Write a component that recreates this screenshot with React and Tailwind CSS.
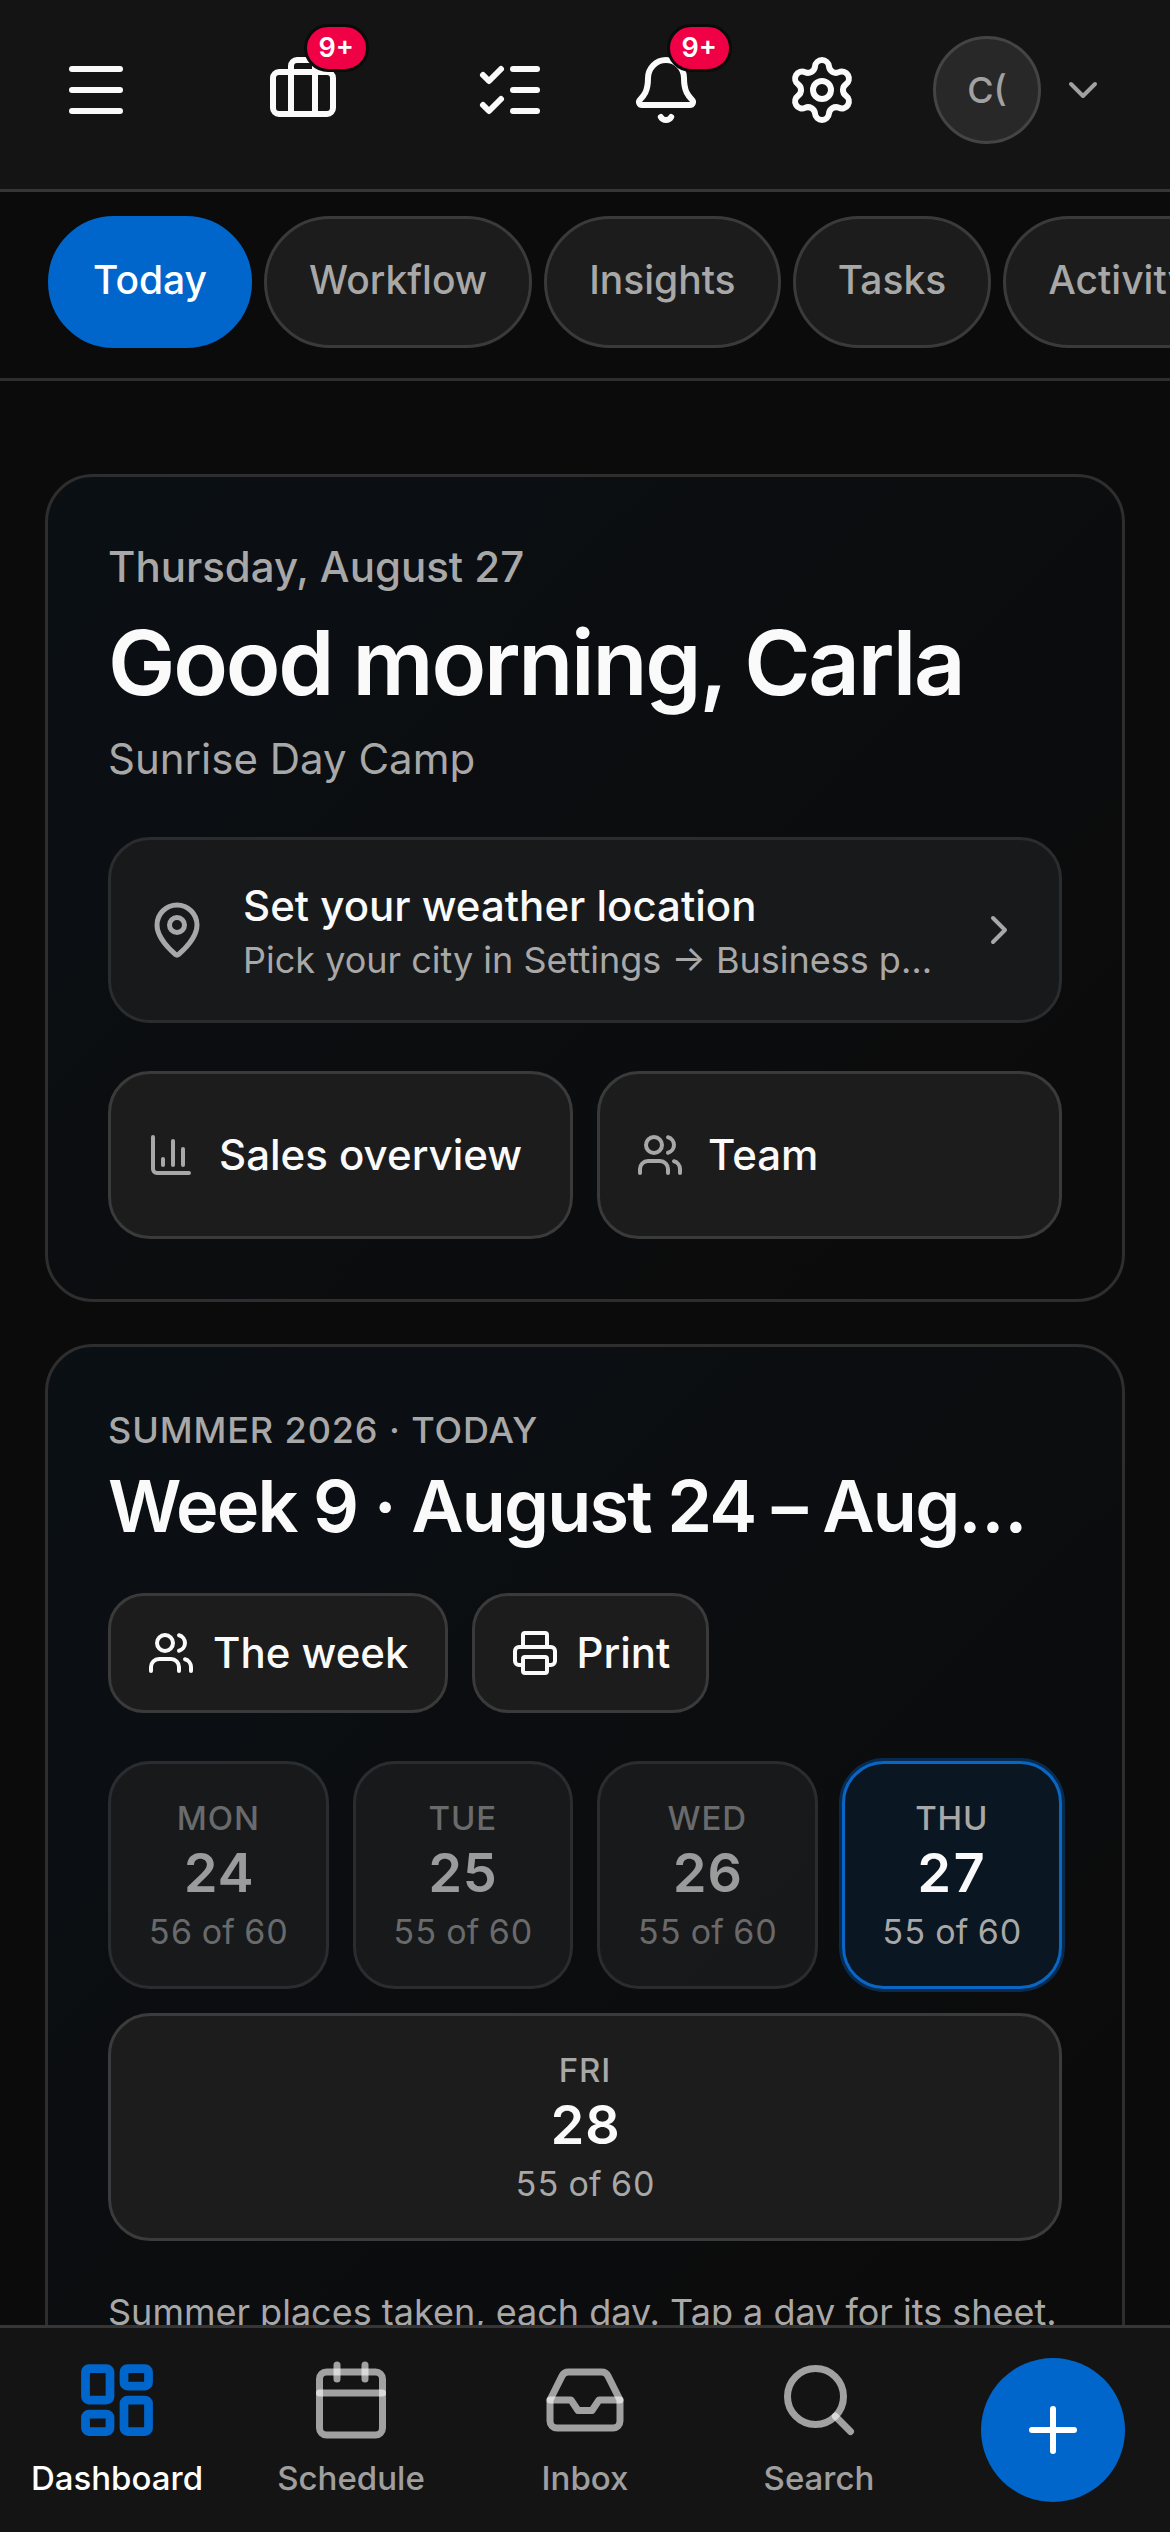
import {
  Bell,
  Briefcase,
  Calendar,
  ChartColumn,
  ChevronDown,
  ChevronRight,
  Inbox,
  LayoutDashboard,
  ListChecks,
  MapPin,
  Menu,
  Plus,
  Printer,
  Search,
  Settings,
  Users,
} from "lucide-react";
import { useState } from "react";
import clsx from "clsx";

const tabs = ["Today", "Workflow", "Insights", "Tasks", "Activity"];

const days = [
  { name: "Mon", date: 24, taken: 56, past: true },
  { name: "Tue", date: 25, taken: 55, past: true },
  { name: "Wed", date: 26, taken: 55, past: true },
  { name: "Thu", date: 27, taken: 55, today: true },
  { name: "Fri", date: 28, taken: 55 },
];

const navItems = [
  { label: "Dashboard", icon: LayoutDashboard },
  { label: "Schedule", icon: Calendar },
  { label: "Inbox", icon: Inbox },
  { label: "Search", icon: Search },
];

const IconButton = ({ label, icon: Icon, badge }) => (
  <button
    type="button"
    aria-label={label}
    className="relative flex size-[132px] items-center justify-center text-neutral-50"
  >
    <Icon className="size-[72px]" />
    {badge && (
      <span className="absolute top-0 right-0 flex h-12 items-center rounded-full border-3 border-[#0b0b0b] bg-[#f00044] px-3 text-[27px] leading-[40px] font-semibold text-white">
        {badge}
      </span>
    )}
  </button>
);

const Header = () => (
  <header className="flex items-center justify-between border-b-3 border-[#363636] bg-[#141414] px-[30px] pt-6 pb-[33px]">
    <IconButton label="Menu" icon={Menu} />
    <IconButton label="Business" icon={Briefcase} badge="9+" />
    <div className="flex items-center gap-6">
      <IconButton label="Tasks" icon={ListChecks} />
      <IconButton label="Notifications" icon={Bell} badge="9+" />
      <IconButton label="Settings" icon={Settings} />
      <button
        type="button"
        aria-label="Account"
        className="flex items-center gap-[18px] pr-[33px] pl-[21px] text-neutral-400"
      >
        <span className="flex size-[108px] items-center justify-center rounded-full border-3 border-[#444] bg-[#282828] text-4xl font-medium">
          C(
        </span>
        <ChevronDown className="size-12" />
      </button>
    </div>
  </header>
);

const Tabs = () => {
  const [active, setActive] = useState("Today");

  return (
    <div className="flex gap-3 overflow-x-auto border-b-3 border-[#2e2e2e] px-12 pt-6 pb-[30px] [scrollbar-width:none]">
      {tabs.map((tab) => (
        <button
          key={tab}
          type="button"
          onClick={() => setActive(tab)}
          className={clsx(
            "h-[132px] shrink-0 rounded-full border-3 px-[42px] pb-1 text-[39px] leading-[60px] font-medium",
            tab === active
              ? "border-[#0066cc] bg-[#0066cc] text-white"
              : "border-[#3a3a3a] bg-[#1c1c1c] text-[#a8a8a8]"
          )}
        >
          {tab}
        </button>
      ))}
    </div>
  );
};

const Card = ({ children }) => (
  <section className="rounded-[48px] border-3 border-[#2e2e2e] bg-[linear-gradient(135deg,rgba(0,102,204,0.05),transparent_90%)] p-[60px]">
    {children}
  </section>
);

const Greeting = () => (
  <Card>
    <p className="text-[42px] leading-[60px] font-medium text-[#a8a8a8]">
      Thursday, August 27
    </p>
    <h1 className="mt-3 text-[90px] leading-[108px] font-semibold tracking-tight text-neutral-50">
      Good morning, Carla
    </h1>
    <p className="mt-3 text-[42px] leading-[60px] text-[#a8a8a8]">
      Sunrise Day Camp
    </p>

    <a
      href="#weather"
      className="mt-12 flex items-center gap-9 rounded-[42px] border-3 border-[#2b2c2d] bg-[#18191a] p-9 text-[#a8a8a8]"
    >
      <MapPin className="size-[60px] shrink-0" />
      <span className="min-w-0 flex-1">
        <span className="block truncate text-[42px] leading-[60px] font-medium text-neutral-50">
          Set your weather location
        </span>
        <span className="block truncate text-4xl leading-[48px]">
          Pick your city in Settings → Business profile
        </span>
      </span>
      <ChevronRight className="size-12 shrink-0" />
    </a>

    <div className="mt-12 grid grid-cols-2 gap-6">
      <ShortcutLink label="Sales overview" href="#sales" icon={ChartColumn} />
      <ShortcutLink label="Team" href="#team" icon={Users} />
    </div>
  </Card>
);

const ShortcutLink = ({ label, href, icon: Icon }) => (
  <a
    href={href}
    className="flex h-[168px] items-center gap-6 rounded-[42px] border-3 border-[#3a3a3a] bg-[#1c1c1c] px-9 text-[42px] leading-[60px] font-medium text-neutral-50"
  >
    <Icon className="size-12 shrink-0 text-[#a8a8a8]" />
    {label}
  </a>
);

const ActionButton = ({ label, icon: Icon }) => (
  <button
    type="button"
    className="flex h-[120px] items-center gap-[18px] rounded-[36px] border-3 border-[#3a3a3a] bg-[#1c1c1c] px-9 text-[42px] leading-[60px] font-medium text-neutral-50"
  >
    <Icon className="size-12" />
    {label}
  </button>
);

const DayButton = ({ day }) => (
  <button
    type="button"
    className={clsx(
      "flex min-w-[210px] flex-1 flex-col items-center rounded-[42px] border-3 py-[30px] leading-[48px] text-[#a8a8a8] tabular-nums",
      day.today && "border-[#0a66c4] bg-[#0a1622] ring-3 ring-[#0066cc]/35",
      day.past && "border-[#404244] bg-[#202122] opacity-60",
      !day.today && !day.past && "border-[#3a3b3c] bg-[#1c1c1c]"
    )}
  >
    <span className="text-[33px] font-medium tracking-wide uppercase">
      {day.name}
    </span>
    <span className="mb-1 text-[54px] leading-[62px] font-semibold text-neutral-50">
      {day.date}
    </span>
    <span className="text-[34px]">{day.taken} of 60</span>
  </button>
);

const WeekCard = () => (
  <Card>
    <p className="text-4xl leading-[46px] font-medium tracking-wide text-[#a8a8a8] uppercase">
      Summer 2026 · Today
    </p>
    <h2 className="mt-2 truncate text-7xl leading-[90px] font-semibold tracking-tight text-neutral-50">
      Week 9 · August 24 – August 28
    </h2>

    <div className="mt-[42px] flex gap-6">
      <ActionButton label="The week" icon={Users} />
      <ActionButton label="Print" icon={Printer} />
    </div>

    <div className="mt-12 flex flex-wrap gap-6">
      {days.map((day) => (
        <DayButton key={day.name} day={day} />
      ))}
    </div>

    <p className="mt-[42px] text-4xl leading-[58px] text-[#a8a8a8]">
      Summer places taken, each day. Tap a day for its sheet.
    </p>
  </Card>
);

const BottomNav = () => {
  const [active, setActive] = useState("Dashboard");

  return (
    <nav className="grid grid-cols-5 items-center border-t-3 border-[#363636] bg-[#141414] py-[30px]">
      {navItems.map(({ label, icon: Icon }) => (
        <button
          key={label}
          type="button"
          onClick={() => setActive(label)}
          className={clsx(
            "flex flex-col items-center gap-3 text-[33px] leading-[48px] font-medium",
            label === active ? "text-white" : "text-white/60"
          )}
        >
          <Icon
            className={clsx("size-[84px]", label === active && "text-[#0066cc]")}
            strokeWidth={label === active ? 2.5 : 2}
          />
          {label}
        </button>
      ))}
      <button
        type="button"
        aria-label="Add"
        className="flex size-36 items-center justify-center justify-self-center rounded-full bg-[#0066cc] text-white"
      >
        <Plus className="size-[72px]" />
      </button>
    </nav>
  );
};

const App = () => {
  return (
    <div className="flex h-screen flex-col bg-[#0b0b0b] font-[Inter,sans-serif]">
      <Header />
      <Tabs />
      <main className="flex min-h-0 flex-1 flex-col gap-[42px] overflow-y-auto px-[45px] pt-[93px] pb-12 [scrollbar-width:none]">
        <Greeting />
        <WeekCard />
      </main>
      <BottomNav />
    </div>
  );
};

export default App;
